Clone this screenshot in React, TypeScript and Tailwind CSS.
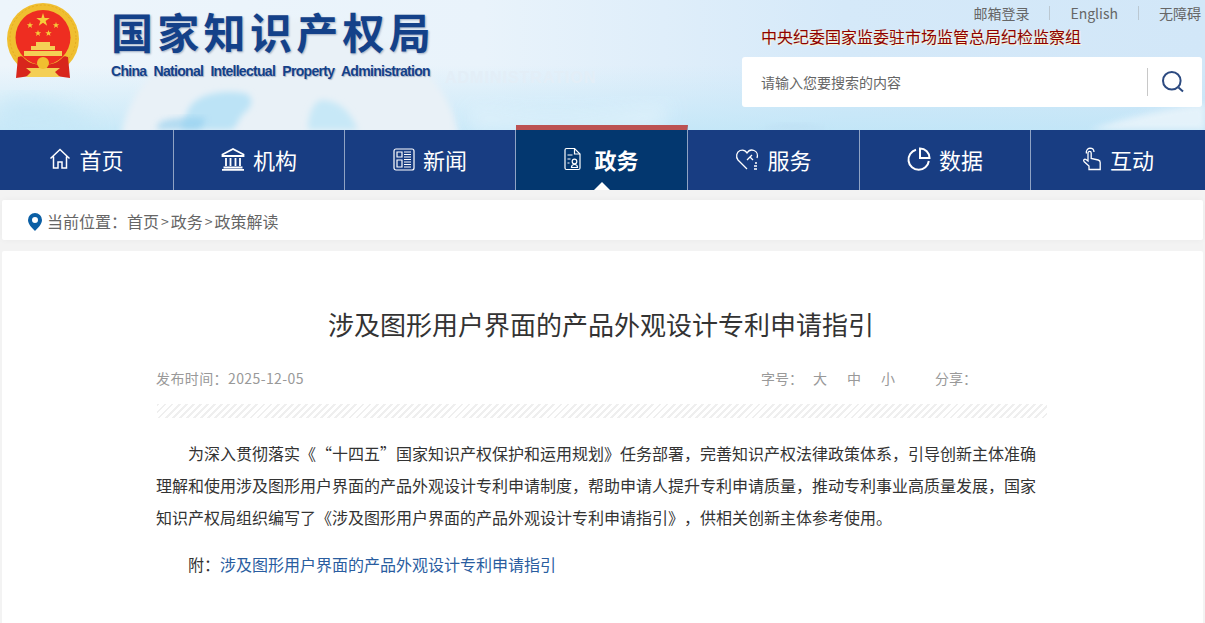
import type { ReactNode } from 'react';

const cjk = "font-['Microsoft_YaHei','Noto_Sans_CJK_SC',sans-serif]";

const navItems: { label: string; icon: ReactNode; active?: boolean }[] = [
  {
    label: '首页',
    icon: (
      <svg width="22" height="24" viewBox="0 0 22 24" fill="none" stroke="currentColor" strokeWidth="1.5">
        <path d="M1.500 11.500 11 2.500l9.500 9M4.500 9.500v11.500h4.500v-6h4v6h4.500V9.500" />
      </svg>
    ),
  },
  {
    label: '机构',
    icon: (
      <svg width="24" height="24" viewBox="0 0 24 24" fill="none" stroke="currentColor" strokeWidth="1.8">
        <path d="M1.500 7.500 12 2l10.500 5.500v1.500h-21zM5 11v8M9.500 11v8M14.500 11v8M19 11v8M2.500 20.500h19M1 22.800h22" />
      </svg>
    ),
  },
  {
    label: '新闻',
    icon: (
      <svg width="22" height="24" viewBox="0 0 22 24" fill="none" stroke="currentColor" strokeWidth="1.2">
        <rect x="1" y="2" width="20" height="21" rx="2" />
        <path d="M4 5h5v5H4zM4 13h5v7H4z" />
        <path d="M11 5h7M11 7.500h7M11 10h7M11 12.500h7M11 15h7M11 17.500h7M11 20h7" />
      </svg>
    ),
  },
  {
    label: '政务',
    active: true,
    icon: (
      <svg width="17" height="24" viewBox="0 0 17 24" fill="none" stroke="currentColor" strokeWidth="1.2">
        <path d="M2.500 1.500h8l5.500 5.500v14a1.500 1.500 0 0 1-1.500 1.500h-12A1.500 1.500 0 0 1 1 21V3a1.500 1.500 0 0 1 1.500-1.500z" />
        <path d="M10.500 1.500V7H16M3.500 8h5M3.500 12h3M3.500 16h2" />
        <circle cx="10.500" cy="14.500" r="2.300" />
        <path d="M7.500 20.500c0-2 1.200-3 3-3s3 1 3 3z" />
      </svg>
    ),
  },
  {
    label: '服务',
    icon: (
      <svg width="24" height="24" viewBox="0 0 24 24" fill="none" stroke="currentColor" strokeWidth="1.3">
        <path d="M12 22 3 13C0.500 10 1.500 5 5 3.500c2.800-1 5.500 0 7 2.500 1.500-2.500 4.500-3.500 7-2.500 3 1.200 4 4.500 3 7.500" />
        <path d="m12 13 5-5M15 10l3 3M19 19h3M19 22h3M20 16h2" />
      </svg>
    ),
  },
  {
    label: '数据',
    icon: (
      <svg width="24" height="24" viewBox="0 0 24 24" fill="none" stroke="currentColor" strokeWidth="2">
        <path d="M9 2.800A10.200 10.200 0 1 0 21.800 14" />
        <path d="M13 1.500v9.500h9.500A9.500 9.500 0 0 0 13 1.500z" />
      </svg>
    ),
  },
  {
    label: '互动',
    icon: (
      <svg width="20" height="24" viewBox="0 0 20 24" fill="none" stroke="currentColor" strokeWidth="1.3">
        <path d="M4.500 6.500A4 4 0 0 1 8 1.200a4 4 0 0 1 4 3.800" />
        <path d="M7 22.500v-3.500l-5-4.500c-1-1.500 0.500-3 2-2L6 14V6a1.600 1.600 0 0 1 3.200 0v5.500l7 1.500c1.500.4 2 1.200 2 2.500v7z" />
      </svg>
    ),
  },
];

function NavCell({ label, icon, active }: { label: string; icon: ReactNode; active?: boolean }) {
  if (active) {
    return (
      <div className="relative -mt-[5px] flex h-[65px] items-center justify-center gap-[13px] border-t-[5px] border-r border-t-[#bc5252] border-r-[#8fa3c4] bg-[#03376f] pb-[2px] text-white">
        {icon}
        <span className="text-[22px] font-bold">{label}</span>
        <span className="absolute bottom-0 left-1/2 h-0 w-0 -translate-x-1/2 border-x-[8px] border-b-[8px] border-x-transparent border-b-white" />
      </div>
    );
  }
  return (
    <div className="flex h-[60px] items-center justify-center gap-2 border-r border-[#8fa3c4] pb-[2px] text-white last:border-r-0">
      {icon}
      <span className="text-[22px]">{label}</span>
    </div>
  );
}

function Emblem() {
  return (
    <svg width="86" height="80" viewBox="0 0 86 80">
      <circle cx="43" cy="39" r="36" fill="#f0bf30" />
      <circle cx="43" cy="38" r="33" fill="none" stroke="#e5ab22" strokeWidth="1" strokeDasharray="2 2" />
      <circle cx="43" cy="37.500" r="27.500" fill="#ee2d21" />
      <path d="M43 13l1.600 4.900h5.100l-4.100 3 1.600 4.900-4.200-3-4.200 3 1.600-4.900-4.100-3h5.100z" fill="#f6cc3a" />
      <path d="M30 22l.8 2.300h2.400l-1.900 1.400.7 2.300-2-1.400-2 1.400.7-2.300-1.900-1.400h2.400zM56 22l.8 2.300h2.400l-1.900 1.400.7 2.300-2-1.400-2 1.400.7-2.300-1.900-1.400h2.400zM38 30l.8 2.300h2.400l-1.900 1.400.7 2.300-2-1.400-2 1.400.7-2.300-1.900-1.400h2.400zM48.500 30l.8 2.300h2.400l-1.900 1.400.7 2.300-2-1.400-2 1.400.7-2.300-1.900-1.400h2.400z" fill="#f6cc3a" />
      <path d="M36 42h14v4h5v4H31v-4h5zM24 51h38v5H24z" fill="#f4cf55" />
      <path d="M18 57c3-1 4-1 5 0 5 6 12 8 20 8s15-2 20-8c1-1 2-1 5 0l2 21-14-2H30l-14 2z" fill="#d8261c" />
      <path d="M26 68h34l-5 4 5 5H26l5-5z" fill="#f4cf55" />
      <circle cx="43" cy="63" r="6" fill="#f0bf30" />
    </svg>
  );
}

function HeaderBackdrop() {
  return (
    <svg className="absolute inset-0 h-full w-full" viewBox="0 0 1205 130" preserveAspectRatio="none">
      <defs>
        <linearGradient id="sky" x1="0" y1="0" x2="1" y2="0">
          <stop offset="0" stopColor="#edf5fb" />
          <stop offset="0.4" stopColor="#e9f3fb" />
          <stop offset="0.7" stopColor="#d5e9f9" />
          <stop offset="1" stopColor="#d2e7f8" />
        </linearGradient>
        <linearGradient id="haze" x1="0" y1="0" x2="0" y2="1">
          <stop offset="0.5" stopColor="#c3e7f8" stopOpacity="0" />
          <stop offset="1" stopColor="#bde5f7" stopOpacity="0.75" />
        </linearGradient>
        <filter id="soft" x="-20%" y="-20%" width="140%" height="140%">
          <feGaussianBlur stdDeviation="3" />
        </filter>
        <filter id="softer" x="-20%" y="-20%" width="140%" height="140%">
          <feGaussianBlur stdDeviation="10" />
        </filter>
      </defs>
      <rect width="1205" height="130" fill="url(#sky)" />
      <rect width="1205" height="130" fill="url(#haze)" />
      <ellipse cx="290" cy="150" rx="170" ry="130" fill="#e9f1f7" filter="url(#soft)" />
      <path d="M197 100c12-8 34-10 50-6 8 6 4 14-4 20-6 6-4 12-12 16h-50c4-12 6-24 16-30z" fill="#bce3f6" filter="url(#soft)" />
      <path d="M160 122c10-4 30-6 46-4l-6 12h-44z" fill="#8fcdee" opacity="0.6" filter="url(#soft)" />
      <path d="M320 100c20 0 30 12 38 30h-50c0-10 2-24 12-30z" fill="#c7e8f7" filter="url(#soft)" />
      <path d="M0 100c40-8 70 0 100 30H0z" fill="#c4e7f7" opacity="0.7" filter="url(#softer)" />
      <path d="M470 104c60 14 130 10 200-2l-10 28H470z" fill="#dff1fb" opacity="0.9" filter="url(#softer)" />
      <path d="M1090 130c40-14 80-22 115-26v26z" fill="#ecf5fb" opacity="0.8" filter="url(#soft)" />
      <path d="M760 130c20-8 50-8 70 0z" fill="#bcdcf2" opacity="0.6" filter="url(#soft)" />
    </svg>
  );
}

export default function App() {
  return (
    <div className={`${cjk} h-[623px] w-[1205px] overflow-hidden bg-[#f3f3f3] [text-spacing-trim:space-all]`}>
      {/* Header */}
      <header className="relative flex h-[130px]">
        <HeaderBackdrop />
        <div className="relative flex w-[742px] shrink-0 items-start">
          <Emblem />
          <div className="ml-[25px] pt-[5px]">
            <div className="whitespace-nowrap text-[42px] font-bold leading-[52px] tracking-[4.300px] text-[#144189] [text-shadow:1px_1px_2px_rgba(20,40,90,0.35)]">国家知识产权局</div>
            <div className="mt-[5px] whitespace-nowrap font-['Liberation_Sans',sans-serif] text-[14px] font-bold leading-[18px] tracking-[-0.7px] text-[#144189] [word-spacing:4px] [text-shadow:1px_1px_1px_rgba(20,40,90,0.3)]">
              China National Intellectual Property Administration
            </div>
          </div>
          <div className="absolute left-[445px] top-[66px] whitespace-nowrap font-['Liberation_Sans',sans-serif] text-[16px] font-bold tracking-[1px] text-[#e3eef7]">
            ADMINISTRATION
          </div>
        </div>
        <div className="relative flex-1">
          <div className="flex h-[26px] items-center justify-end text-sm text-[#666]">
            <span>邮箱登录</span>
            <span className="mx-5 h-[14px] w-px bg-[#bbc8d2]" />
            <span>English</span>
            <span className="mx-5 h-[14px] w-px bg-[#bbc8d2]" />
            <span className="mr-[4px]">无障碍</span>
          </div>
          <div className="ml-[19px] h-[31px] text-base leading-[20px] text-[#8e0000] [text-shadow:1px_1px_0_#fff3c8]">中央纪委国家监委驻市场监管总局纪检监察组</div>
          <div className="mr-[3px] flex h-[50px] items-center rounded-[3px] bg-white pl-[19px] pr-[18px]">
            <span className="flex-1 text-sm text-[#666]">请输入您要搜索的内容</span>
            <span className="mr-[14px] h-[28px] w-px bg-[#c8c8c8]" />
            <svg width="22" height="22" viewBox="0 0 22 22" fill="none" stroke="#2c4a80" strokeWidth="2">
              <circle cx="9.800" cy="9.800" r="8.800" />
              <path d="m16.500 16.500 4.500 4" />
            </svg>
          </div>
        </div>
      </header>

      {/* Nav */}
      <nav className="grid h-[60px] grid-cols-[174px_171px_171px_172px_172px_171px_1fr] bg-[#183d82]">
        {navItems.map((item) => (
          <NavCell key={item.label} {...item} />
        ))}
      </nav>

      {/* Breadcrumb */}
      <div className="mx-[2px] mt-[10px] flex h-[40px] items-center rounded-[2px] bg-white pl-[26px] text-base text-[#666] shadow-[0_0_6px_rgba(0,0,0,0.04)]">
        <svg className="mr-[5px] mt-[3px]" width="14" height="18" viewBox="0 0 14 18">
          <path fillRule="evenodd" d="M7 0a7 7 0 0 1 7 7c0 4-4 8-7 11C4 15 0 11 0 7a7 7 0 0 1 7-7zm0 4a3 3 0 1 0 0 6 3 3 0 0 0 0-6z" fill="#0b5fa5" />
        </svg>
        <div className="flex items-center pt-[2px]">
          <span>当前位置：</span>
          <span>首页</span>
          <span className="mx-[2px] text-sm">&gt;</span>
          <span>政务</span>
          <span className="mx-[2px] text-sm">&gt;</span>
          <span>政策解读</span>
        </div>
      </div>

      {/* Article */}
      <main className="ml-[2px] mr-[2px] mt-[11px] h-[400px] rounded-[2px] bg-white pl-[155px] pr-[156px] pt-[52px]">
        <h1 className="-ml-[2px] text-center text-[26px] leading-[42px] font-normal text-[#333]">涉及图形用户界面的产品外观设计专利申请指引</h1>
        <div className="mt-[21px] flex h-[24px] items-center text-sm text-[#999]">
          <span className="-ml-px w-[605px] tracking-[0.4px]">发布时间：2025-12-05</span>
          <span>字号：</span>
          <span className="ml-[10px]">大</span>
          <span className="ml-5">中</span>
          <span className="ml-5">小</span>
          <span className="ml-10">分享：</span>
        </div>
        <div className="mt-[14px] h-[14px] bg-[repeating-linear-gradient(135deg,#efefef_0,#efefef_2px,#ffffff_2px,#ffffff_5px)]" />
        <div className="-ml-px mt-[19px] text-base leading-[32px] text-[#333]">
          <p className="indent-8">
            为深入贯彻落实《“十四五”国家知识产权保护和运用规划》任务部署，完善知识产权法律政策体系，引导创新主体准确理解和使用涉及图形用户界面的产品外观设计专利申请制度，帮助申请人提升专利申请质量，推动专利事业高质量发展，国家知识产权局组织编写了《涉及图形用户界面的产品外观设计专利申请指引》，供相关创新主体参考使用。
          </p>
          <p className="mt-[15px] indent-8">
            附：<span className="text-[#2a5d9f]">涉及图形用户界面的产品外观设计专利申请指引</span>
          </p>
        </div>
      </main>
    </div>
  );
}
